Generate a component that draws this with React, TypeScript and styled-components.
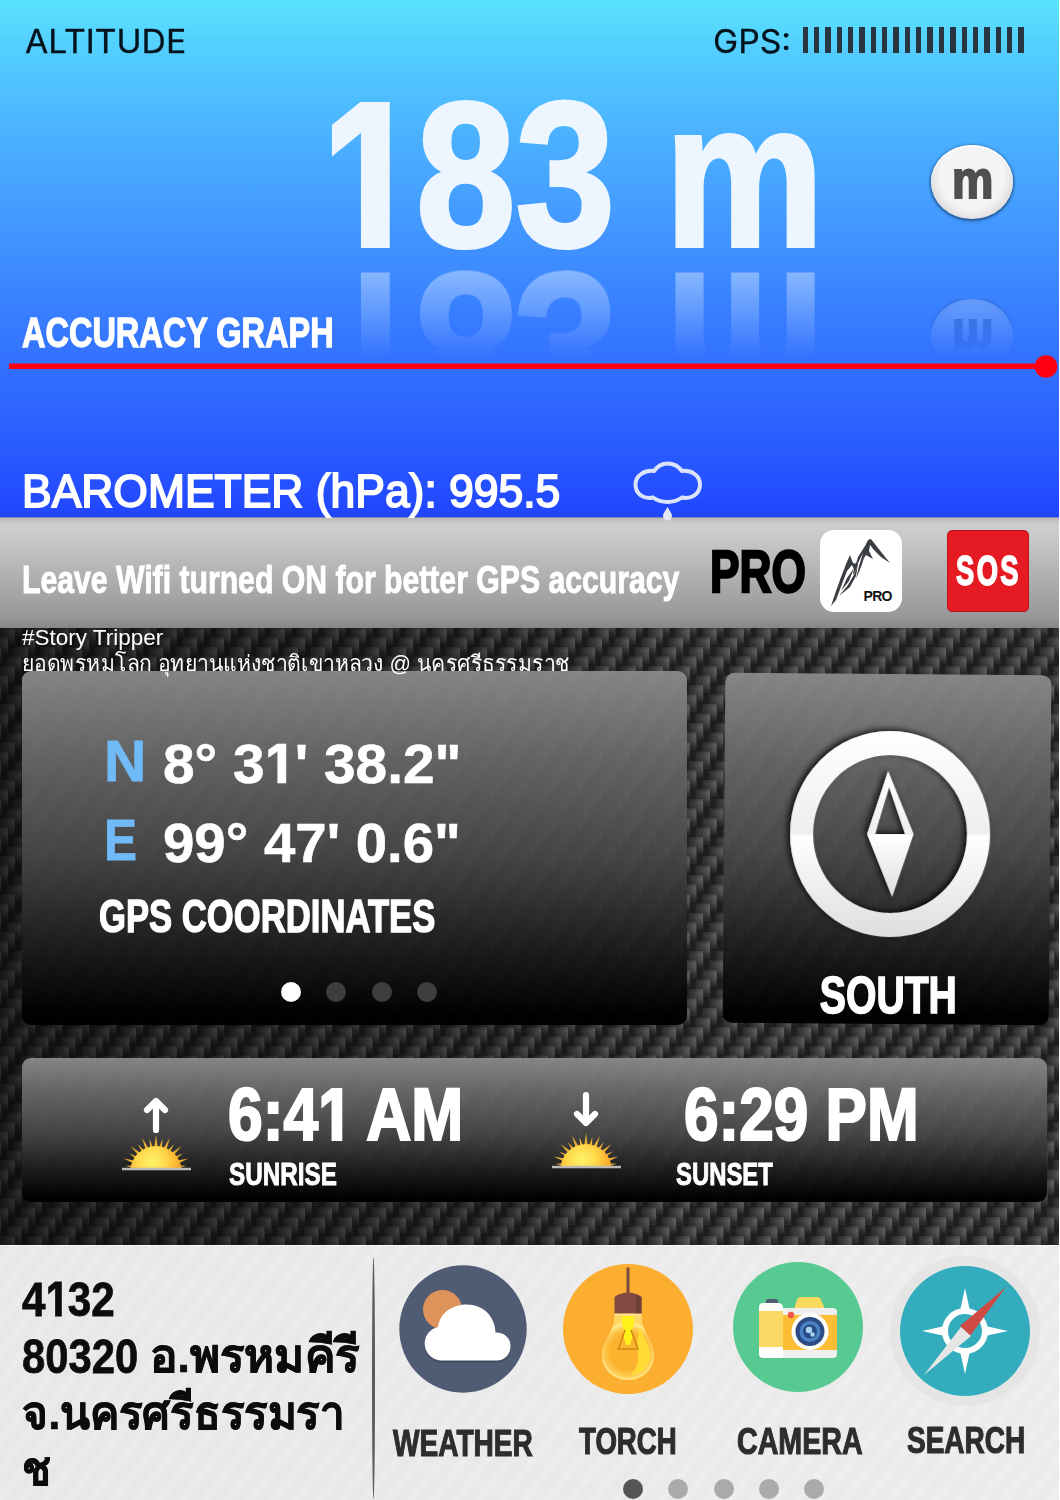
import { ReactNode, useLayoutEffect, useRef, useState } from "react";
import styled, { createGlobalStyle } from "styled-components";

const GlobalStyle = createGlobalStyle`
  * {
    box-sizing: border-box;
  }
  body {
    margin: 0;
    background: #fff;
    font-family: "Liberation Sans", sans-serif;
  }
`;

const Screen = styled.main`
  width: 1059px;
  height: 1500px;
  display: flex;
  flex-direction: column;
  overflow: hidden;
`;

/* ---------- condensed text ---------- */

const FitBox = styled.div<{ $width: number; $size: number }>`
  width: ${(props) => props.$width}px;
  height: ${(props) => props.$size}px;
  font-size: ${(props) => props.$size}px;
  line-height: 1;
  flex-shrink: 0;
`;
const FitText = styled.span<{ $weight: number; $inter?: boolean; $stroke?: number }>`
  display: inline-block;
  vertical-align: top;
  white-space: nowrap;
  transform-origin: left center;
  font-weight: ${(props) => props.$weight};
  -webkit-text-stroke: ${(props) => props.$stroke ?? 0}px currentColor;
  ${(props) => props.$inter && 'font-family: Inter, "Liberation Sans", sans-serif;'}
`;
// a 1 without a foot, as tall as its neighbours
const One = styled.span`
  font-family: Inter, sans-serif;
  font-size: 0.946em;
  line-height: 0;
  margin: 0 0.1em 0 0.03em;
`;

interface FitProps {
  width: number;
  size: number;
  weight?: number;
  inter?: boolean;
  stroke?: number;
  children: ReactNode;
}

// squeezes a line of text to the width it has on the dial
const Fit = ({ width, size, weight = 700, inter, stroke, children }: FitProps) => {
  const ref = useRef<HTMLSpanElement>(null);
  const [scale, setScale] = useState(1);
  useLayoutEffect(() => {
    if (ref.current) setScale(width / ref.current.offsetWidth);
  }, [width, size, children]);
  return (
    <FitBox $width={width} $size={size}>
      <FitText
        ref={ref}
        $weight={weight}
        $inter={inter}
        $stroke={stroke ?? (weight === 700 ? size * 0.03 : 0)}
        style={{ transform: `scaleX(${scale})` }}
      >
        {children}
      </FitText>
    </FitBox>
  );
};

/* ---------- sky ---------- */

const Sky = styled.section`
  height: 517px;
  flex-shrink: 0;
  color: #fff;
  background: linear-gradient(
    #5ae3ff 0,
    #53ceff 50px,
    #4cb6ff 120px,
    #46a2ff 190px,
    #3f8eff 260px,
    #3679ff 330px,
    #306aff 390px,
    #295bff 450px,
    #2145ff 517px
  );
`;
const TopBar = styled.header`
  height: 60px;
  padding: 26px 35px 0 25px;
  display: flex;
  justify-content: space-between;
  color: #04121c;
`;
const Signal = styled.div`
  display: flex;
  gap: 12px;
`;
const Bars = styled.div`
  display: flex;
  justify-content: space-between;
  width: 221.5px;
  padding-top: 1px;
`;
const Bar = styled.i`
  width: 5.4px;
  height: 26px;
  background: #273640;
`;
const Readout = styled.div`
  height: 251px;
  display: flex;
  padding: 12px 0 0 321px;
`;
const Altitude = styled.div`
  height: 206px;
  width: 504px;
  color: rgb(237, 246, 255);
  -webkit-box-reflect: below -35.5px linear-gradient(transparent 44%, rgba(0, 0, 0, 0.42) 86%);
`;
const UnitButton = styled.button`
  width: 82px;
  height: 74px;
  margin: 73px 0 0 106px;
  padding: 0;
  border: 0;
  border-radius: 50%;
  display: flex;
  justify-content: center;
  align-items: center;
  color: #505050;
  background: radial-gradient(ellipse at 50% 42%, #f4f4f4 55%, #e2dfdd 72%);
  box-shadow: 0 1px 3px 1px rgba(20, 50, 90, 0.75), inset 0 2px 2px #fff;
  -webkit-box-reflect: below 80px linear-gradient(transparent 22%, rgba(0, 0, 0, 0.26));
`;
const UnitLabel = styled.div`
  padding-bottom: 4px;
`;
const SkyTitle = styled.div`
  height: 43px;
  padding-left: 22px;
`;
const Graph = styled.svg`
  display: block;
  width: 1059px;
  height: 24px;
`;
const Barometer = styled.div`
  display: flex;
  margin-top: 82px;
  padding-left: 22px;
`;
const BarometerText = styled.div`
  padding-top: 8px;
  width: 610px;
`;
const CloudIcon = styled.svg`
  position: relative;
  z-index: 1;
  overflow: visible;
`;

/* ---------- banner ---------- */

const Banner = styled.section`
  height: 111px;
  flex-shrink: 0;
  display: flex;
  align-items: flex-start;
  padding: 12px 0 0 22px;
  border-top: 1px solid #8588a6;
  background: linear-gradient(#bbb 0, #cecece 6px, #cacaca 16px, #979797 100px, #858585 111px);
`;
const Tip = styled.div`
  width: 688px;
  padding-top: 31px;
  color: #fff;
`;
const Pro = styled.div`
  width: 110px;
  padding-top: 12px;
  color: #000;
`;
const AppIcon = styled.svg`
  width: 82px;
  height: 82px;
  border-radius: 14px;
  background: #fff;
`;
const Sos = styled.button`
  width: 82px;
  height: 82px;
  margin-left: 45px;
  padding: 0;
  border: 1px solid #b5161d;
  border-radius: 5px;
  background: #e61a23;
  color: #fff;
  display: flex;
  align-items: center;
  justify-content: center;
  span {
    letter-spacing: 0.09em;
    margin-right: -0.09em;
  }
`;

/* ---------- carbon ---------- */

const Carbon = styled.section`
  position: relative;
  height: 617px;
  flex-shrink: 0;
  color: #fff;
  background: #1c1b1b;
`;
const Weave = styled.svg`
  position: absolute;
  inset: 0;
  width: 100%;
  height: 100%;
`;
const CarbonBody = styled.div`
  position: relative;
  padding-left: 22px;
`;
const Caption = styled.div`
  height: 43px;
  margin-top: -1px;
  padding-bottom: 1px;
  overflow: visible;
`;
const CaptionLine = styled.div<{ $top: number }>`
  padding-top: ${(props) => props.$top}px;
`;
const panel = `
  border-radius: 9px;
  background: linear-gradient(
    rgba(138, 138, 138, 0.95),
    rgba(104, 104, 104, 0.92) 25%,
    rgba(72, 72, 72, 0.91) 52%,
    rgba(28, 28, 28, 0.92) 78%,
    rgba(0, 0, 0, 0.97) 97%
  );
`;
const Panels = styled.div`
  display: flex;
  gap: 37px;
  margin-top: 1px;
`;
const Coordinates = styled.div`
  ${panel}
  width: 665px;
  height: 354px;
  padding: 62px 0 0 79px;
`;
const CoordRow = styled.div`
  display: flex;
  height: 79px;
`;
const Axis = styled.div`
  width: 62px;
  padding: 0 0 0 3px;
  color: #70baf8;
`;
const CoordValue = styled.div`
  padding-top: 3px;
`;
const CoordTitle = styled.div`
  padding: 2px 0 0;
  margin-left: -2px;
  height: 91px;
`;
const Dots = styled.div<{ $left: number }>`
  display: flex;
  gap: 25.3px;
  padding-left: ${(props) => props.$left}px;
`;
const Dot = styled.i<{ $color: string }>`
  width: 20px;
  height: 20px;
  border-radius: 50%;
  background: ${(props) => props.$color};
`;
const Heading = styled.div`
  ${panel}
  width: 326px;
  height: 350px;
  margin-top: 3px;
  transform: rotate(0.45deg);
  display: flex;
  flex-direction: column;
  align-items: center;
`;
const Dial = styled.svg`
  display: block;
  margin: 45px 0 0 6px;
  transform: rotate(-0.45deg);
  flex-shrink: 0;
`;
const HeadingLabel = styled.div`
  margin: 20px 0 0 5px;
  transform: rotate(-0.45deg);
`;
const SunPanel = styled.div`
  ${panel}
  width: 1025px;
  height: 144px;
  margin-top: 33px;
  display: flex;
`;
const SunIcon = styled.svg<{ $left: number; $top: number }>`
  margin: ${(props) => props.$top}px 0 0 ${(props) => props.$left}px;
  width: 72px;
  height: 80px;
  flex-shrink: 0;
`;
const SunTimes = styled.div<{ $left: number; $top: number; $indent?: number }>`
  margin: ${(props) => props.$top}px 0 0 ${(props) => props.$left}px;
  width: 250px;
  & > :first-child {
    margin-left: ${(props) => props.$indent ?? 0}px;
  }
`;
const SunLabel = styled.div<{ $top: number }>`
  margin-top: ${(props) => props.$top}px;
  padding-left: 1px;
`;

/* ---------- footer ---------- */

const Footer = styled.footer`
  height: 255px;
  flex-shrink: 0;
  display: flex;
  border-top: 1px solid #f8f8f8;
  background: repeating-linear-gradient(
      128deg,
      rgba(0, 0, 0, 0.008) 0 6px,
      rgba(255, 255, 255, 0.1) 11px 13px,
      rgba(0, 0, 0, 0.008) 18px
    ),
    linear-gradient(90deg, #e9e9e9, #ededed);
`;
const Address = styled.div`
  width: 372px;
  padding: 29px 0 0 22px;
  color: #0c0c0c;
`;
const AddressLine = styled.div`
  height: 56.8px;
  display: flex;
`;
const PostCode = styled.div`
  width: 128px;
`;
const Divider = styled.div`
  width: 3px;
  height: 242px;
  margin-top: 11px;
  border-radius: 50%;
  background: #5b5b5b;
`;
const Tools = styled.div`
  display: flex;
  flex-direction: column;
`;
const ToolRow = styled.nav`
  display: flex;
  height: 233px;
`;
const Tool = styled.div<{ $width: number; $top: number; $shift?: number }>`
  width: ${(props) => props.$width}px;
  padding-top: ${(props) => props.$top}px;
  display: flex;
  flex-direction: column;
  align-items: center;
  color: #2d2d2d;
  svg {
    display: block;
    overflow: visible;
    margin-left: ${(props) => props.$shift ?? 0}px;
  }
`;
const ToolLabel = styled.div<{ $top: number }>`
  margin-top: ${(props) => props.$top}px;
`;

/* ---------- drawings ---------- */

const rays = [-84, -72, -60, -48, -36, -24, -12, 0, 12, 24, 36, 48, 60, 72, 84];

const Sun = ({ id, down, left, top }: { id: string; down?: boolean; left: number; top: number }) => (
  <SunIcon $left={left} $top={top} viewBox="0 0 72 80">
    <defs>
      <radialGradient id={id} cx="0.42" cy="0.32" r="0.62">
        <stop offset="0" stopColor="#fff36a" />
        <stop offset="0.45" stopColor="#ffd94a" />
        <stop offset="1" stopColor="#f99d20" />
      </radialGradient>
      <clipPath id={`${id}-clip`}>
        <rect width="72" height="75" />
      </clipPath>
    </defs>
    <path
      d={down ? "M36 4v28M27 23l9 9 9-9" : "M36 37V8M27 17l9-9 9 9"}
      fill="none"
      stroke="#fff"
      strokeWidth="6.2"
      strokeLinecap="round"
      strokeLinejoin="round"
    />
    <g clipPath={`url(#${id}-clip)`}>
      {rays.map((a, i) => (
        <path
          key={a}
          d={i % 2 ? "M34 56L36 42l2 14z" : "M34 58L36 45l2 13z"}
          fill="#e8ae33"
          transform={`rotate(${a} 36 76)`}
        />
      ))}
      <ellipse cx="36" cy="78" rx="25.5" ry="25" fill={`url(#${id})`} />
    </g>
    <path d="M2 76h69" stroke="#bdb9b5" strokeWidth="2.6" />
  </SunIcon>
);

const Mountain = () => (
  <AppIcon viewBox="0 0 82 82">
    <g fill="#3b3e42">
      <path d="M48 10l3-1 7 9 12 15-9-6-7-7-4-5-1 6 4 8-7-4-2 3-3 9-5 12 3-13 4-13-5 10-4 12-1-2 5-16 7-11z" />
      <path d="M30 25l3 8 5 1-3 8-3-7-5 6-5 13-6 16-5 6 5-15 6-16 4-11z" />
      <path d="M24 40l-3 14-2 5 1-9zM34 38l-5 13-8 10 6-13zM38 34l-2 12-6 11-11 9 9-11 7-12z" />
    </g>
    <text x="43.5" y="71" fontSize="14" fontWeight="700" fontFamily="Liberation Sans" textLength="29" fill="#111">
      PRO
    </text>
  </AppIcon>
);

const WeatherIcon = () => (
  <svg width="128" height="128" viewBox="0 0 128 128">
    <circle cx="64" cy="64" r="63.7" fill="#505c74" />
    <circle cx="43.500" cy="44.500" r="19.500" fill="#de935a" />
    <path
      d="M41 98a17 17 0 0 1-2-33.500C41 50 53 41 67.500 41 84 41 96 53 96.500 69.500 105 69 111.500 75 111.500 83.500 111.500 92 106 98 98 98z"
      fill="#3c465a"
      opacity=".55"
    />
    <path
      d="M41 95.500a17 17 0 0 1-2-33.500C41 48 53 39.500 67.500 39.500 84 39.500 96 51 96.500 67.500 105 67 111.500 73 111.500 81 111.500 89 106 95.500 98 95.500z"
      fill="#fff"
    />
  </svg>
);

const TorchIcon = () => (
  <svg width="130" height="130" viewBox="0 0 130 130">
    <defs>
      <radialGradient id="bulb" gradientUnits="userSpaceOnUse" cx="65" cy="88" r="30">
        <stop offset="0.6" stopColor="#fcb22e" />
        <stop offset="0.8" stopColor="#fec950" />
        <stop offset="0.95" stopColor="#ffef93" />
        <stop offset="1" stopColor="#ffd765" />
      </radialGradient>
    </defs>
    <circle cx="65" cy="65" r="65" fill="#fbae30" />
    <path d="M65 3.500v27" stroke="#7c4a42" strokeWidth="3" />
    <path
      d="M51.500 51h27c0 18 12.500 25 12.500 40 0 14-11 25-26 25S39 105 39 91c0-15 12.500-22 12.500-40z"
      fill="url(#bulb)"
    />
    <path d="M77 62c2 12 10 18 10 29 0 11-8 19-20 21 6-7 9-13 8-22-1-11-1-16 2-28z" fill="#ffdc35" />
    <path d="M59 52h12v9l-2 4 1 6-3 10h-4l-3-10 1-6-2-4z" fill="#fff11a" />
    <path d="M62 66l-6.500 19H75l-7-19" fill="none" stroke="#cf8a12" strokeWidth="1.600" />
    <path d="M51.500 33c7-6 20-6 27 0v16.500h-27z" fill="#844b42" />
    <path d="M73 30.500l5.500 2.500v16.500H73z" fill="#6f4038" />
    <path d="M51.500 50.500h27" stroke="#ffe8a0" strokeWidth="1.500" />
  </svg>
);

const CameraIcon = () => (
  <svg width="130" height="130" viewBox="0 0 130 130">
    <circle cx="65" cy="65" r="65" fill="#57ca91" />
    <path d="M33 39q0-2 2-2h8q2 0 2 2v4H33z" fill="#505c74" />
    <path d="M61 47l3-9q1-3 4-3h16q3 0 4 3l4 9z" fill="#fbd95f" />
    <path d="M50 46h50q4 0 4 4v42q0 4-4 4H50z" fill="#efefef" />
    <path d="M50 53h54v35H50z" fill="#fdbe36" />
    <path d="M26 45q0-4 4-4h15q5 0 5 5v50H30q-4 0-4-4z" fill="#fff" />
    <path d="M26 49h24v36H26z" fill="#fbd964" />
    <circle cx="58" cy="53" r="3.200" fill="#f05548" />
    <circle cx="77" cy="69.500" r="18.500" fill="#fff" />
    <circle cx="77" cy="69.500" r="14.500" fill="#2c4a83" />
    <circle cx="77" cy="69.500" r="10.500" fill="#4a83c5" />
    <circle cx="77" cy="69.500" r="7" fill="#2c4a83" />
    <circle cx="76" cy="68" r="3.200" fill="#a9d7f3" />
    <circle cx="79.500" cy="72.500" r="2.200" fill="#a9d7f3" />
  </svg>
);

const SearchIcon = () => (
  <svg width="130" height="130" viewBox="0 0 130 130">
    <circle cx="65" cy="65" r="75" fill="#e5e5e5" />
    <circle cx="65" cy="65" r="65" fill="#33adbd" />
    <circle cx="65" cy="65" r="20" fill="none" stroke="#fff" strokeWidth="6" />
    <g fill="#fff">
      <path d="M65 22l5 23H60z M65 108l5-23H60z M22 65l23-5v10z M108 65l-23-5v10z" />
    </g>
    <path d="M106 21L60 60l10 10z" fill="#ce4a43" />
    <path d="M24 109l37-48 10 9z" fill="#e6e6e6" />
  </svg>
);

const App = () => {
  return (
    <Screen>
      <GlobalStyle />
      <Sky>
        <TopBar>
          <Fit width={161} size={32} weight={400} inter stroke={0.3}>
            ALTITUDE
          </Fit>
          <Signal>
            <Fit width={78} size={32} weight={400} inter stroke={0.3}>
              GPS:
            </Fit>
            <Bars>
              {Array.from({ length: 20 }, (_, i) => (
                <Bar key={i} />
              ))}
            </Bars>
          </Signal>
        </TopBar>
        <Readout>
          <Altitude>
            <Fit width={503} size={206} stroke={4}>
              <One>1</One>83 m
            </Fit>
          </Altitude>
          <UnitButton>
            <UnitLabel>
              <Fit width={41} size={51} stroke={2}>
                m
              </Fit>
            </UnitLabel>
          </UnitButton>
        </Readout>
        <SkyTitle>
          <Fit width={312} size={43}>
            ACCURACY GRAPH
          </Fit>
        </SkyTitle>
        <Graph>
          <path d="M9 12.200h1032" stroke="#fe0010" strokeWidth="5.600" />
          <circle cx="1046" cy="12.500" r="11.300" fill="#fe0010" />
        </Graph>
        <Barometer>
          <BarometerText>
            <Fit width={538} size={46} weight={400} stroke={1.8}>
              BAROMETER (hPa): 995.5
            </Fit>
          </BarometerText>
          <CloudIcon width="72" height="57" viewBox="0 0 72 57">
            <path
              d="M22 11C26 5.500 30 3.500 35.500 3.500S46 5.500 50 11c9-1 18 4 18 13.500S59 39.500 50 37.500c-4 3-8 4.500-14.500 4.500S25 40.500 21 37.500C12 39.500 3.500 34 3.500 24.500S13 10 22 11z"
              fill="none"
              stroke="#dbe2fb"
              strokeWidth="4"
            />
            <path d="M35.500 47c2 4 4.500 6 4.500 9a4.500 4.500 0 0 1-9 0c0-3 2.500-5 4.500-9z" fill="#e3e6f2" />
          </CloudIcon>
        </Barometer>
      </Sky>

      <Banner>
        <Tip>
          <Fit width={657} size={38} stroke={0.9}>
            Leave Wifi turned ON for better GPS accuracy
          </Fit>
        </Tip>
        <Pro>
          <Fit width={96} size={60} stroke={2.4}>
            PRO
          </Fit>
        </Pro>
        <Mountain />
        <Sos>
          <Fit width={65} size={42} stroke={1.8}>
            SOS
          </Fit>
        </Sos>
      </Banner>

      <Carbon>
        <Weave>
          <defs>
            <linearGradient id="fibre">
              <stop offset="0" stopColor="#2b2a2a" />
              <stop offset="0.5" stopColor="#454343" />
              <stop offset="0.95" stopColor="#646161" />
              <stop offset="1" stopColor="#3a3939" />
            </linearGradient>
            <linearGradient id="shade" x2="0" y2="1">
              <stop offset="0" stopColor="#1d1c1c" stopOpacity="0.3" />
              <stop offset="0.2" stopColor="#1d1c1c" stopOpacity="0" />
              <stop offset="0.5" stopColor="#1d1c1c" stopOpacity="0.2" />
              <stop offset="1" stopColor="#1d1c1c" stopOpacity="0.9" />
            </linearGradient>
            <linearGradient id="fall">
              <stop offset="0" stopColor="#000" stopOpacity="0.5" />
              <stop offset="0.45" stopColor="#000" stopOpacity="0.25" />
              <stop offset="0.65" stopColor="#000" stopOpacity="0" />
            </linearGradient>
            <pattern id="weave" width="27" height="38" patternUnits="userSpaceOnUse">
              <rect width="27" height="38" fill="#1f1e1e" />
              {[-2, -1, 0, 1, 2, 3].map((row) =>
                [-1, 0, 1, 2].map((col) => (
                  <g key={`${row}-${col}`} transform={`translate(${col * 27 - row * 6.75} ${row * 9.5})`}>
                    <rect width="15" height="17" fill="url(#fibre)" />
                    <rect width="15" height="17" fill="url(#shade)" />
                  </g>
                ))
              )}
            </pattern>
          </defs>
          <rect width="100%" height="100%" fill="url(#weave)" />
          <rect width="100%" height="100%" fill="url(#fall)" />
        </Weave>
        <CarbonBody>
          <Caption>
            <Fit width={141} size={22} weight={400}>
              #Story Tripper
            </Fit>
            <CaptionLine $top={4}>
              <Fit width={548} size={22} weight={400}>
                ยอดพรหมโลก อุทยานแห่งชาติเขาหลวง @ นครศรีธรรมราช
              </Fit>
            </CaptionLine>
          </Caption>
          <Panels>
            <Coordinates>
              <CoordRow>
                <Axis>
                  <Fit width={42} size={57} stroke={0.8}>
                    N
                  </Fit>
                </Axis>
                <CoordValue>
                  <Fit width={298} size={56} stroke={0.6}>
                    8° 3<One>1</One>' 38.2"
                  </Fit>
                </CoordValue>
              </CoordRow>
              <CoordRow>
                <Axis>
                  <Fit width={33} size={57} stroke={0.8}>
                    E
                  </Fit>
                </Axis>
                <CoordValue>
                  <Fit width={298} size={56} stroke={0.6}>
                    99° 47' 0.6"
                  </Fit>
                </CoordValue>
              </CoordRow>
              <CoordTitle>
                <Fit width={336} size={46}>
                  GPS COORDINATES
                </Fit>
              </CoordTitle>
              <Dots $left={180}>
                {["#fff", "#3e3e3e", "#3e3e3e", "#3e3e3e"].map((color, i) => (
                  <Dot key={i} $color={color} />
                ))}
              </Dots>
            </Coordinates>
            <Heading>
              <Dial width="220" height="230" viewBox="0 0 220 230">
                <defs>
                  <linearGradient id="ring" x2="0" y2="1">
                    <stop offset="0" stopColor="#fff" />
                    <stop offset="0.5" stopColor="#eee" />
                    <stop offset="0.51" stopColor="#fff" />
                    <stop offset="1" stopColor="#dedede" />
                  </linearGradient>
                  <filter id="drop" x="-10%" y="-10%" width="120%" height="120%">
                    <feDropShadow dx="-3" dy="-2" stdDeviation="3" floodColor="#000" floodOpacity="0.8" />
                  </filter>
                </defs>
                <g fill="url(#ring)" fillRule="evenodd" filter="url(#drop)">
                  <path d="M110 12a100 103 0 0 1 0 206 100 103 0 0 1 0-206zm0 24a77 79 0 0 0 0 158 77 79 0 0 0 0-158z" />
                  <path d="M108 52l25.500 63L112 178l-25-63zm1 16L95 115h30z" />
                </g>
              </Dial>
              <HeadingLabel>
                <Fit width={137} size={52}>
                  SOUTH
                </Fit>
              </HeadingLabel>
            </Heading>
          </Panels>
          <SunPanel>
            <Sun id="sunrise" left={98} top={35} />
            <SunTimes $left={36} $top={20}>
              <Fit width={235} size={74}>
                6:4<One>1</One> AM
              </Fit>
              <SunLabel $top={7}>
                <Fit width={108} size={31}>
                  SUNRISE
                </Fit>
              </SunLabel>
            </SunTimes>
            <Sun id="sunset" down left={72} top={33} />
            <SunTimes $left={53} $top={20} $indent={9}>
              <Fit width={235} size={74}>
                6:29 PM
              </Fit>
              <SunLabel $top={7}>
                <Fit width={97} size={31}>
                  SUNSET
                </Fit>
              </SunLabel>
            </SunTimes>
          </SunPanel>
        </CarbonBody>
      </Carbon>

      <Footer>
        <Address>
          <AddressLine>
            <Fit width={93} size={49} stroke={0.8}>
              4<One>1</One>32
            </Fit>
          </AddressLine>
          <AddressLine>
            <PostCode>
              <Fit width={116} size={49} stroke={0.8}>
                80320
              </Fit>
            </PostCode>
            <Fit width={209} size={47} stroke={0.6}>
              อ.พรหมคีรี
            </Fit>
          </AddressLine>
          <AddressLine>
            <Fit width={322} size={47} stroke={0.6}>
              จ.นครศรีธรรมรา
            </Fit>
          </AddressLine>
          <AddressLine>
            <Fit width={29} size={47} stroke={0.6}>
              ช
            </Fit>
          </AddressLine>
        </Address>
        <Divider />
        <Tools>
          <ToolRow>
            <Tool $width={175} $top={19}>
              <WeatherIcon />
              <ToolLabel $top={32}>
                <Fit width={140} size={37.5}>
                  WEATHER
                </Fit>
              </ToolLabel>
            </Tool>
            <Tool $width={155} $top={18}>
              <TorchIcon />
              <ToolLabel $top={29}>
                <Fit width={98} size={37.5}>
                  TORCH
                </Fit>
              </ToolLabel>
            </Tool>
            <Tool $width={190} $top={16} $shift={-5}>
              <CameraIcon />
              <ToolLabel $top={31}>
                <Fit width={126} size={37.5}>
                  CAMERA
                </Fit>
              </ToolLabel>
            </Tool>
            <Tool $width={142} $top={20} $shift={-3}>
              <SearchIcon />
              <ToolLabel $top={26}>
                <Fit width={118} size={37.5}>
                  SEARCH
                </Fit>
              </ToolLabel>
            </Tool>
          </ToolRow>
          <Dots $left={248}>
            {["#555", "#aaa", "#aaa", "#aaa", "#aaa"].map((color, i) => (
              <Dot key={i} $color={color} />
            ))}
          </Dots>
        </Tools>
      </Footer>
    </Screen>
  );
};

export default App;
